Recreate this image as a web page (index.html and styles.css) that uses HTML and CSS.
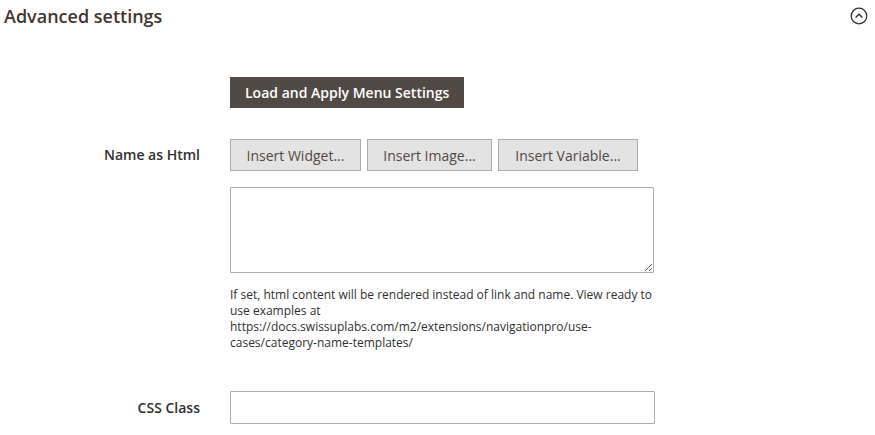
FILE: index.html
```html
<!DOCTYPE html>
<html>
<head>
<meta charset="utf-8">
<link rel="stylesheet" href="styles.css">
</head>
<body>
<div class="section">
  <div class="section-head">
    <h2 class="title">Advanced settings</h2>
    <span class="toggle">
      <svg width="18" height="18" viewBox="0 0 18 18">
        <circle cx="9" cy="9" r="7.8" fill="none" stroke="#303030" stroke-width="1.3"/>
        <path d="M5.6 10.6 L9 7.2 L12.4 10.6" fill="none" stroke="#303030" stroke-width="1.4"/>
      </svg>
    </span>
  </div>
  <div class="form">
    <div class="row row-load">
      <div class="label"></div>
      <div class="control">
        <button class="btn-primary">Load and Apply Menu Settings</button>
      </div>
    </div>
    <div class="row row-html">
      <div class="label label-btn">Name as Html</div>
      <div class="control">
        <div class="btn-group">
          <button class="btn-default w-widget">Insert Widget...</button>
          <button class="btn-default w-image">Insert Image...</button>
          <button class="btn-default w-variable">Insert Variable...</button>
        </div>
        <textarea class="textarea"></textarea>
        <div class="note">If set, html content will be rendered instead of link and name. View ready to use examples at https://docs.swissuplabs.com/m2/extensions/navigationpro/use-cases/category-name-templates/</div>
      </div>
    </div>
    <div class="row row-css">
      <div class="label label-input">CSS Class</div>
      <div class="control">
        <input class="input" type="text">
      </div>
    </div>
  </div>
</div>
</body>
</html>
```

FILE: styles.css
```css
html, body {
  margin: 0;
  padding: 0;
  background: #ffffff;
}
body {
  font-family: "Open Sans", "Noto Sans", sans-serif;
  color: #303030;
  width: 875px;
  height: 435px;
  overflow: hidden;
}
.section-head {
  display: flex;
  align-items: center;
  justify-content: space-between;
  height: 32px;
  padding: 0 7px 0 4px;
}
.title {
  margin: 0;
  font-size: 18px;
  font-weight: 600;
  color: #41362f;
  line-height: 20px;
}
.toggle {
  display: flex;
  width: 18px;
  height: 18px;
}
.form {
  display: flex;
  flex-direction: column;
}
.row {
  display: flex;
  gap: 30px;
}
.label {
  width: 200px;
  flex: none;
  text-align: right;
  font-size: 14px;
  font-weight: 600;
  color: #303030;
}
.label-btn {
  line-height: 32px;
}
.label-input {
  line-height: 33px;
}
.control {
  width: 425px;
  display: flex;
  flex-direction: column;
  align-items: flex-start;
}
.row-load {
  margin-top: 45px;
}
.row-html {
  margin-top: 31px;
}
.row-css {
  margin-top: 40px;
}
.btn-primary {
  height: 31px;
  padding: 0 14px;
  border: 1px solid #514943;
  background: #514943;
  color: #ffffff;
  font-family: inherit;
  font-size: 14px;
  font-weight: 600;
  cursor: pointer;
}
.btn-group {
  display: flex;
  gap: 6px;
}
.btn-default {
  height: 32px;
  padding: 0;
  border: 1px solid #adadad;
  background: #e3e3e3;
  color: #514943;
  font-family: inherit;
  font-size: 14px;
  font-weight: 500;
}
.w-widget { width: 131px; }
.w-image { width: 125px; }
.w-variable { width: 140px; }
.textarea {
  display: block;
  box-sizing: border-box;
  width: 424px;
  height: 86px;
  margin-top: 16px;
  border: 1px solid #adadad;
  border-radius: 1px;
  resize: vertical;
}
.note {
  margin-top: 14px;
  width: 424px;
  font-size: 12px;
  line-height: 16px;
  color: #303030;
}
.input {
  box-sizing: border-box;
  width: 425px;
  height: 33px;
  border: 1px solid #adadad;
  border-radius: 1px;
  margin: 0;
}
```
